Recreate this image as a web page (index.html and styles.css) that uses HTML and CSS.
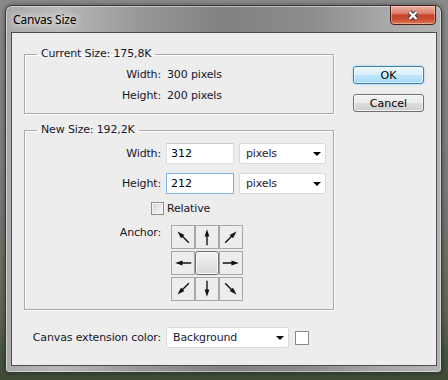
FILE: index.html
```html
<!DOCTYPE html>
<html lang="en">
<head>
    <meta charset="UTF-8">
    <title>Canvas Size</title>
    <link rel="stylesheet" href="styles.css">
</head>
<body>
    <svg class="defs" width="0" height="0">
        <symbol id="arrow" viewBox="0 0 24 24">
            <path d="M12 21 L12 9" stroke="#111" stroke-width="1.5"/>
            <polygon points="12,3.5 9.4,11.5 14.6,11.5" fill="#111"/>
        </symbol>
    </svg>
    <div class="window">
        <div class="titlebar">
            <span class="title">Canvas Size</span>
            <button type="button" class="close" aria-label="Close">
                <svg width="14" height="11" viewBox="0 0 14 11">
                    <path d="M3.5 2 L10.5 9 M10.5 2 L3.5 9" stroke="#3b3b3b" stroke-width="4.4"/>
                    <path d="M3.5 2 L10.5 9 M10.5 2 L3.5 9" stroke="#fff" stroke-width="2.4"/>
                </svg>
            </button>
        </div>
        <div class="client">
            <div class="main">
                <fieldset class="group current">
                    <legend>Current Size: 175,8K</legend>
                    <div class="rows">
                        <span class="label">Width:</span><span class="value">300 pixels</span>
                        <span class="label">Height:</span><span class="value">200 pixels</span>
                    </div>
                </fieldset>
                <fieldset class="group new">
                    <legend>New Size: 192,2K</legend>
                    <div class="fields">
                        <span class="label">Width:</span>
                        <input class="num" type="text" value="312">
                        <div class="select"><span>pixels</span><i class="caret"></i></div>
                        <span class="label">Height:</span>
                        <input class="num focused" type="text" value="212">
                        <div class="select"><span>pixels</span><i class="caret"></i></div>
                    </div>
                    <div class="relative">
                        <span class="check"></span><span>Relative</span>
                    </div>
                    <div class="anchor-row">
                        <span class="label">Anchor:</span>
                        <div class="anchor">
                            <span class="cell"><svg class="arr nw"><use href="#arrow"/></svg></span>
                            <span class="cell"><svg class="arr n"><use href="#arrow"/></svg></span>
                            <span class="cell"><svg class="arr ne"><use href="#arrow"/></svg></span>
                            <span class="cell"><svg class="arr w"><use href="#arrow"/></svg></span>
                            <span class="cell center"></span>
                            <span class="cell"><svg class="arr e"><use href="#arrow"/></svg></span>
                            <span class="cell"><svg class="arr sw"><use href="#arrow"/></svg></span>
                            <span class="cell"><svg class="arr s"><use href="#arrow"/></svg></span>
                            <span class="cell"><svg class="arr se"><use href="#arrow"/></svg></span>
                        </div>
                    </div>
                </fieldset>
                <div class="extension">
                    <span class="label">Canvas extension color:</span>
                    <div class="select"><span>Background</span><i class="caret"></i></div>
                    <span class="swatch"></span>
                </div>
            </div>
            <div class="side">
                <button type="button" class="btn ok">OK</button>
                <button type="button" class="btn">Cancel</button>
            </div>
        </div>
    </div>
</body>
</html>
```

FILE: styles.css
```css
body {
    margin: 0;
    height: 380px;
    overflow: hidden;
    background: linear-gradient(180deg, #8a8a8a 0%, #7a7a7a 50%, #5f6754 82%, #3f4a36 100%);
    font-family: "DejaVu Sans", sans-serif;
    font-size: 11px;
    letter-spacing: -0.15px;
    color: #16162a;
}
.defs {
    position: absolute;
}
.window {
    width: 437px;
    height: 368px;
    box-sizing: border-box;
    margin: 5px 0 0 5px;
    padding: 0 4px 6px 5px;
    border: 1px solid #3a3a3a;
    border-radius: 7px 7px 4px 4px;
    background: linear-gradient(90deg, #a9a9a9 0%, #b8b8b8 12%, #999 30%, #818181 50%, #8c8c8c 70%, #aaa 88%, #b3b3b3 100%);
    box-shadow: inset 0 0 0 1px rgba(255, 255, 255, 0.45), 0 0 5px rgba(0, 0, 0, 0.45);
    display: flex;
    flex-direction: column;
}
.titlebar {
    height: 26px;
    display: flex;
    justify-content: space-between;
    align-items: flex-start;
}
.title {
    font-family: "Noto Sans", sans-serif;
    font-size: 12px;
    letter-spacing: -0.2px;
    line-height: 16px;
    margin: 6px 0 0 2px;
    color: #000;
    text-shadow: 0 0 6px #fff, 0 0 10px #eee;
}
.close {
    width: 46px;
    height: 20px;
    margin: -1px 1px 0 0;
    padding: 0;
    border: 1px solid #4a2018;
    border-radius: 0 0 4px 4px;
    background: linear-gradient(180deg, #eab0a2 0%, #d9806c 40%, #c5442c 52%, #c94d33 75%, #e07a58 100%);
    box-shadow: inset 0 0 0 1px rgba(255, 255, 255, 0.35);
    display: flex;
    align-items: center;
    justify-content: center;
}
.client {
    flex: 1;
    display: flex;
    padding: 14px 0 0 12px;
    border: 1px solid #4c4c4c;
    background: #ededed;
}
.main {
    width: 310px;
}
.side {
    width: 71px;
    margin-left: 19px;
    padding-top: 19px;
    display: flex;
    flex-direction: column;
    gap: 10px;
}
.group {
    margin: 0;
    padding: 0;
    min-width: 0;
    border: 1px solid #a9a9a9;
    box-shadow: 1px 1px 0 #fff, inset 1px 1px 0 #fff;
}
.group legend {
    margin-left: 12px;
    padding: 0 4px;
    line-height: 14px;
}
.group.new {
    margin-top: 9px;
    padding-bottom: 8px;
}
.label {
    text-align: right;
}
.rows {
    display: grid;
    grid-template-columns: 136px auto;
    grid-auto-rows: 21px;
    column-gap: 6px;
    align-items: center;
    padding: 3px 0 7px;
}
.fields {
    display: grid;
    grid-template-columns: 136px 68px 87px;
    grid-auto-rows: 21px;
    column-gap: 5px;
    row-gap: 9px;
    align-items: center;
    padding-top: 6px;
}
.num {
    height: 21px;
    box-sizing: border-box;
    margin: 0;
    padding: 0 4px;
    border: 1px solid #dcdde2;
    border-top-color: #c9cbd1;
    background: #fff;
    font: inherit;
    color: #000;
    outline: none;
}
.num.focused {
    border-color: #7fb4e6;
}
.select {
    height: 21px;
    box-sizing: border-box;
    display: flex;
    align-items: center;
    justify-content: space-between;
    padding: 0 4px 0 6px;
    border: 1px solid #dadada;
    border-radius: 2px;
    background: #fff;
    color: #1a1a3a;
}
.caret {
    width: 0;
    height: 0;
    border-left: 4px solid transparent;
    border-right: 4px solid transparent;
    border-top: 4px solid #000;
}
.relative {
    display: flex;
    align-items: center;
    gap: 3px;
    margin-top: 8px;
    padding-left: 126px;
    height: 13px;
}
.check {
    width: 13px;
    height: 13px;
    box-sizing: border-box;
    border: 1px solid #8e8f8f;
    background: linear-gradient(135deg, #d2d2d2 0%, #ececec 60%, #fafafa 100%);
    box-shadow: inset 0 0 0 1px #f3f3f3;
}
.anchor-row {
    display: flex;
    gap: 10px;
    margin-top: 10px;
}
.anchor-row .label {
    width: 136px;
    line-height: 13px;
    padding-top: 1px;
}
.anchor {
    display: grid;
    grid-template-columns: repeat(3, 24px);
    grid-auto-rows: 24px;
    row-gap: 2px;
}
.cell {
    box-sizing: border-box;
    border: 1px solid #a7a7a7;
    display: flex;
    align-items: center;
    justify-content: center;
}
.cell.center {
    border: 1px solid #6f6f6f;
    border-radius: 3px;
    background: linear-gradient(180deg, #f4f4f4 0%, #e6e6e6 50%, #d9d9d9 100%);
    box-shadow: inset 0 0 0 1px #fafafa;
}
.arr {
    width: 22px;
    height: 22px;
}
.arr.ne { transform: rotate(45deg); }
.arr.e { transform: rotate(90deg); }
.arr.se { transform: rotate(135deg); }
.arr.s { transform: rotate(180deg); }
.arr.sw { transform: rotate(225deg); }
.arr.w { transform: rotate(270deg); }
.arr.nw { transform: rotate(315deg); }
.extension {
    display: grid;
    grid-template-columns: 137px 123px 14px;
    column-gap: 5px;
    align-items: center;
    margin-top: 17px;
}
.swatch {
    width: 14px;
    height: 14px;
    box-sizing: border-box;
    margin-left: 1px;
    border: 1px solid #8a8a8a;
    background: #fff;
}
.btn {
    height: 18px;
    margin: 0;
    padding: 0;
    border: 1px solid #707070;
    border-radius: 3px;
    background: linear-gradient(180deg, #f3f3f3 0%, #ebebeb 50%, #dddddd 51%, #cfcfcf 100%);
    box-shadow: inset 0 0 0 1px rgba(255, 255, 255, 0.7);
    font: inherit;
    color: #000;
}
.btn.ok {
    border-color: #3c7fb1;
    background: linear-gradient(180deg, #eaf6fd 0%, #d9f0fc 50%, #bee6fd 51%, #a7d9f5 100%);
    box-shadow: inset 0 0 0 1px rgba(255, 255, 255, 0.6), 0 0 2px #6cc5f0;
}
```
